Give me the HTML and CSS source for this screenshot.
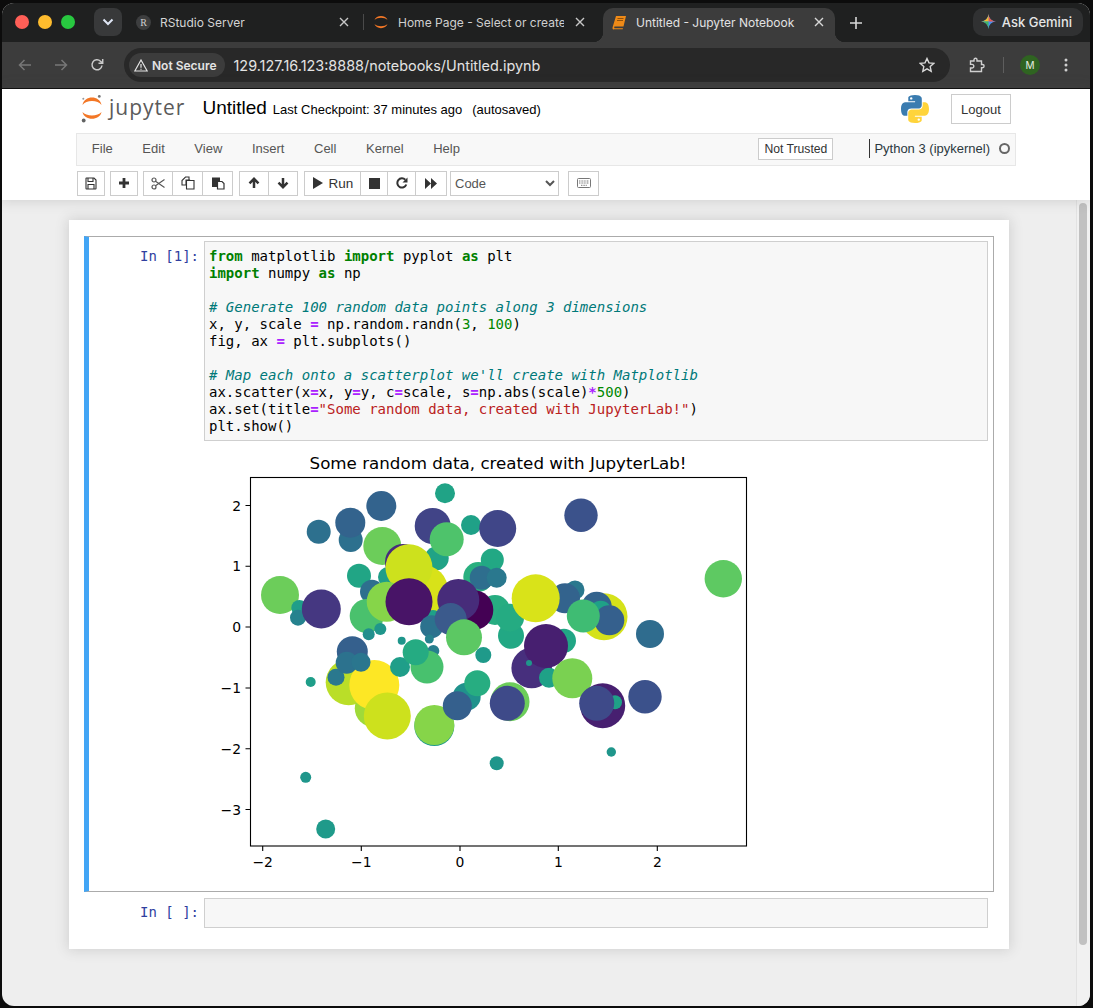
FILE: index.html
```html
<!DOCTYPE html>
<html lang="en">
<head>
	<meta charset="UTF-8">
	<title>Untitled - Jupyter Notebook</title>
	<link rel="stylesheet" href="styles.css">
</head>
<body>
<div class="window">

	<!-- browser tabs -->
	<div class="tabstrip">
		<div class="lights">
			<span class="light light--red"></span>
			<span class="light light--yellow"></span>
			<span class="light light--green"></span>
		</div>
		<div class="tabsearch">
			<svg width="12" height="8" viewBox="0 0 12 8"><path d="M1.5 1.5 6 6l4.5-4.5" fill="none" stroke="#dfe6f5" stroke-width="2"/></svg>
		</div>
		<div class="tab tab--first">
			<span class="tab--rstudio">R</span>
			<span class="tab--text">RStudio Server</span>
			<svg class="tab--close" width="10" height="10" viewBox="0 0 10 10"><path d="M1 1l8 8M9 1l-8 8" stroke="#c7c7c7" stroke-width="1.4"/></svg>
		</div>
		<div class="tab tab--second">
			<svg class="tab--icon" width="16" height="16" viewBox="0 0 16 16"><path d="M1.500 6C3 .5 13 .5 14.500 6 11.500 3 4.500 3 1.500 6zM1.500 10C3 15.500 13 15.500 14.500 10 11.500 13 4.500 13 1.500 10z" fill="#f37726"/></svg>
			<span class="tab--text">Home Page - Select or create</span>
			<svg class="tab--close" width="10" height="10" viewBox="0 0 10 10"><path d="M1 1l8 8M9 1l-8 8" stroke="#c7c7c7" stroke-width="1.4"/></svg>
		</div>
		<div class="tab tab--active">
			<svg class="tab--icon" width="15" height="15" viewBox="0 0 15 15"><path d="M4 1h10l-2.500 10.500H2.500a1.300 1.300 0 0 0 0 1.700H11l-.3 1H2C.8 15 .3 13.500.6 12.300z" fill="#ef8a17"/><path d="M5.500 3.500h6M5 5.500h6" stroke="#7a4308" stroke-width=".8"/></svg>
			<span class="tab--text">Untitled - Jupyter Notebook</span>
			<svg class="tab--close" width="10" height="10" viewBox="0 0 10 10"><path d="M1 1l8 8M9 1l-8 8" stroke="#d8d8d8" stroke-width="1.4"/></svg>
		</div>
		<svg class="newtab" width="12" height="12" viewBox="0 0 12 12"><path d="M6 0v12M0 6h12" stroke="#d8d8d8" stroke-width="1.6"/></svg>
		<div class="gemini">
			<svg width="15" height="15" viewBox="0 0 16 16">
				<path d="M8 0C8.500 4.500 11 7.500 16 8 11 8.500 8.500 11.500 8 16 7.500 11.500 5 8.500 0 8 5 7.500 7.500 4.500 8 0z" fill="#4b90f0"/>
				<path d="M8 0C8.500 4.500 11 7.500 16 8H8z" fill="#ea5a4c"/>
				<path d="M0 8C5 7.500 7.500 4.500 8 0V8z" fill="#f7bd2c"/>
				<path d="M8 16C7.500 11.500 5 8.500 0 8H8z" fill="#3fb463"/>
			</svg>
			<span>Ask Gemini</span>
		</div>
	</div>

	<!-- browser address row -->
	<div class="urlbar">
		<svg class="urlbar--nav" width="14" height="12" viewBox="0 0 14 12"><path d="M13 6H2M6.500 1 1.500 6l5 5" fill="none" stroke="#777" stroke-width="1.500"/></svg>
		<svg class="urlbar--nav" width="14" height="12" viewBox="0 0 14 12"><path d="M1 6h11M7.500 1l5 5-5 5" fill="none" stroke="#777" stroke-width="1.500"/></svg>
		<svg class="urlbar--nav" width="14" height="14" viewBox="0 0 14 14"><path d="M12 7.500A5 5 0 1 1 10.500 3.200L12.500 5M12.700 1v4.200H8.500" fill="none" stroke="#c9c9c9" stroke-width="1.500"/></svg>
		<div class="address">
			<div class="secure">
				<svg width="14" height="13" viewBox="0 0 14 13"><path d="M7 1l6.200 11H.8zM7 5v3.800M7 9.800v1" fill="none" stroke="#e4e4e4" stroke-width="1.200"/></svg>
				<span>Not Secure</span>
			</div>
			<span class="address--url">129.127.16.123:8888/notebooks/Untitled.ipynb</span>
			<svg class="address--star" width="16" height="16" viewBox="0 0 16 16"><path d="M8 1.500l2 4.400 4.700.5-3.500 3.200 1 4.700L8 11.900 3.800 14.300l1-4.700L1.300 6.400 6 5.900z" fill="none" stroke="#d8d8d8" stroke-width="1.400"/></svg>
		</div>
		<svg class="urlbar--ext" width="16" height="16" viewBox="0 0 16 16"><path d="M1.500 4H5V2.800a1.500 1.500 0 0 1 3 0V4h4.500v3.500h1a1.600 1.600 0 0 1 0 3.200h-1V14.500H1.500v-3.500H3a1.800 1.800 0 0 0 0-3.600H1.500z" fill="none" stroke="#d0d0d0" stroke-width="1.400"/></svg>
		<span class="urlbar--sep"></span>
		<span class="avatar">M</span>
		<svg class="urlbar--menu" width="4" height="14" viewBox="0 0 4 14"><circle cx="2" cy="2" r="1.500" fill="#d0d0d0"/><circle cx="2" cy="7" r="1.500" fill="#d0d0d0"/><circle cx="2" cy="12" r="1.500" fill="#d0d0d0"/></svg>
	</div>

	<!-- notebook header -->
	<div class="header">
		<div class="header--top">
			<svg class="logo" width="22" height="28" viewBox="0 0 22 28">
				<path d="M1.500 10C3 0 19 0 20.500 10 17 4.500 5 4.500 1.500 10zM1.500 17C3 26 19 26 20.500 17 17 21.500 5 21.500 1.500 17z" fill="#f37726"/>
				<circle cx="18.300" cy="1.400" r="1.400" fill="#767677"/>
				<circle cx="2.300" cy="3.700" r="1" fill="#989798"/>
				<circle cx="2.700" cy="25.500" r="1.900" fill="#616262"/>
			</svg>
			<span class="logo--text">jupyter</span>
			<span class="name">Untitled</span>
			<span class="checkpoint">Last Checkpoint: 37 minutes ago</span>
			<span class="autosaved">(autosaved)</span>
			<svg class="pylogo" width="28" height="28" viewBox="0 0 110 110">
				<path d="M54.900 0C26.800 0 28.600 12.200 28.600 12.200v12.600h26.800v3.800H17.900S0 26.600 0 54.800 15.600 82 15.600 82h9.300V68.900S24.400 53.300 40.300 53.300h26.500s14.900.2 14.900-14.400V14.800S84 0 54.900 0zM40.200 8.500a4.800 4.800 0 1 1 0 9.600 4.800 4.800 0 0 1 0-9.600z" fill="#3a7cb0"/>
				<path transform="rotate(180 55 55)" d="M54.900 0C26.800 0 28.600 12.200 28.600 12.200v12.600h26.800v3.800H17.900S0 26.600 0 54.800 15.600 82 15.600 82h9.300V68.900S24.400 53.300 40.300 53.300h26.500s14.900.2 14.900-14.400V14.800S84 0 54.900 0zM40.200 8.500a4.800 4.800 0 1 1 0 9.600 4.800 4.800 0 0 1 0-9.600z" fill="#ffd43b"/>
			</svg>
			<button class="logout">Logout</button>
		</div>
		<div class="menubar">
			<span class="menubar--item">File</span>
			<span class="menubar--item">Edit</span>
			<span class="menubar--item">View</span>
			<span class="menubar--item">Insert</span>
			<span class="menubar--item">Cell</span>
			<span class="menubar--item">Kernel</span>
			<span class="menubar--item">Help</span>
			<span class="trusted">Not Trusted</span>
			<span class="kernel">Python 3 (ipykernel)</span>
			<span class="kernel--dot"></span>
		</div>
		<div class="toolbar">
			<div class="group">
				<button class="tool tool--single"><svg width="12" height="13" viewBox="0 0 12 13"><path d="M1.500 1h7.500l2 2v8.500a.5.500 0 0 1-.5.500h-9a.5.500 0 0 1-.5-.5V1.500a.5.500 0 0 1 .5-.5zM3 1v3.500h5V1M3 12V7.500h6V12" fill="none" stroke="#333" stroke-width="1.100"/></svg></button>
			</div>
			<div class="group">
				<button class="tool tool--single"><svg width="12" height="12" viewBox="0 0 12 12"><path d="M6 1v10M1 6h10" stroke="#333" stroke-width="2.800"/></svg></button>
			</div>
			<div class="group group--wide">
				<button class="tool"><svg width="14" height="13" viewBox="0 0 14 13"><circle cx="3" cy="3" r="2" fill="none" stroke="#555" stroke-width="1.200"/><circle cx="3" cy="10" r="2" fill="none" stroke="#555" stroke-width="1.200"/><path d="M4.500 4.300 13.500 10.500M4.500 8.700 13.500 2.500" stroke="#555" stroke-width="1.100"/></svg></button>
				<button class="tool"><svg width="14" height="14" viewBox="0 0 14 14"><path d="M4.500 1H8v3H5V9H1V4.500zM5 4h3.500L9 4.500M5.500 4.500H13V13H5.500z" fill="#fff" stroke="#333" stroke-width="1.100"/></svg></button>
				<button class="tool"><svg width="14" height="14" viewBox="0 0 14 14"><path d="M1 1.500h8V5H6v6H1z" fill="#333"/><path d="M6.500 5.500H11l2 2V13H6.500z" fill="#fff" stroke="#333" stroke-width="1.200"/></svg></button>
			</div>
			<div class="group group--wide">
				<button class="tool"><svg width="12" height="12" viewBox="0 0 12 12"><path d="M6 11V2M1.500 6.300 6 1.800l4.500 4.500" fill="none" stroke="#333" stroke-width="2.500"/></svg></button>
				<button class="tool tool--down"><svg width="12" height="12" viewBox="0 0 12 12"><path d="M6 1v9M1.500 5.700 6 10.200l4.500-4.500" fill="none" stroke="#333" stroke-width="2.500"/></svg></button>
			</div>
			<div class="group">
				<button class="tool tool--run"><svg width="11" height="12" viewBox="0 0 11 12"><path d="M1 0l10 6-10 6z" fill="#333"/></svg><span>Run</span></button>
				<button class="tool tool--stop"><svg width="11" height="11" viewBox="0 0 11 11"><path d="M0 0h11v11H0z" fill="#333"/></svg></button>
				<button class="tool tool--restart"><svg width="12" height="12" viewBox="0 0 12 12"><path d="M10.300 7.500A4.600 4.600 0 1 1 9.300 2.800" fill="none" stroke="#333" stroke-width="2"/><path d="M11.500 0.500v5h-5z" fill="#333"/></svg></button>
				<button class="tool tool--ffwd"><svg width="12" height="11" viewBox="0 0 12 11"><path d="M0 0l6 5.500L0 11zM6 0l6 5.500L6 11z" fill="#333"/></svg></button>
			</div>
			<select class="celltype"><option>Code</option></select>
			<button class="tool tool--keys"><svg width="14" height="10" viewBox="0 0 14 10"><rect x=".5" y=".5" width="13" height="9" rx="1" fill="none" stroke="#777"/><path d="M2 3h10M2 5h10M4 7.300h6" stroke="#777" stroke-dasharray="1 .6"/></svg></button>
		</div>
	</div>

	<div class="site">
		<div class="notebook">
			<div class="panel">

				<div class="cell cell--selected">
					<div class="cell--input">
						<div class="prompt">In [1]:</div>
<pre class="code"><b class="kw">from</b> matplotlib <b class="kw">import</b> pyplot <b class="kw">as</b> plt
<b class="kw">import</b> numpy <b class="kw">as</b> np

<i class="cm"># Generate 100 random data points along 3 dimensions</i>
x, y, scale <b class="op">=</b> np.random.randn(<span class="num">3</span>, <span class="num">100</span>)
fig, ax <b class="op">=</b> plt.subplots()

<i class="cm"># Map each onto a scatterplot we'll create with Matplotlib</i>
ax.scatter(x<b class="op">=</b>x, y<b class="op">=</b>y, c<b class="op">=</b>scale, s<b class="op">=</b>np.abs(scale)<b class="op">*</b><span class="num">500</span>)
ax.set(title<b class="op">=</b><span class="str">"Some random data, created with JupyterLab!"</span>)
plt.show()</pre>
					</div>
					<svg class="plot" width="560" height="445" viewBox="204 441 560 445">
						<text class="plot--title" x="498" y="469" text-anchor="middle">Some random data, created with JupyterLab!</text>
						<g>
							<circle cx="445" cy="493.300" r="10" fill="#20a386"/>
							<circle cx="350.700" cy="540" r="12" fill="#2d708e"/>
							<circle cx="381.300" cy="506" r="15" fill="#33638d"/>
							<circle cx="350.300" cy="522.700" r="15" fill="#33638d"/>
							<circle cx="318.700" cy="531.700" r="12" fill="#2d708e"/>
							<circle cx="432.700" cy="526" r="18" fill="#414487"/>
							<circle cx="436.700" cy="558.300" r="12" fill="#20a386"/>
							<circle cx="446.700" cy="539.300" r="17" fill="#4ec36b"/>
							<circle cx="471" cy="525" r="10" fill="#1fa187"/>
							<circle cx="497.700" cy="528.500" r="18.500" fill="#404688"/>
							<circle cx="382.300" cy="546" r="19" fill="#6ccd5a"/>
							<circle cx="388" cy="577" r="10" fill="#1f9e89"/>
							<circle cx="359" cy="575.700" r="12" fill="#21a585"/>
							<circle cx="372" cy="591.700" r="12" fill="#2e6f8e"/>
							<circle cx="280" cy="595" r="19" fill="#6ccd5a"/>
							<circle cx="299.300" cy="608" r="8" fill="#1f9e89"/>
							<circle cx="298" cy="617.700" r="8" fill="#26828e"/>
							<circle cx="321.300" cy="609" r="19.500" fill="#453781"/>
							<circle cx="366.700" cy="616" r="17" fill="#4ac16d"/>
							<circle cx="423" cy="590" r="25" fill="#d8e219"/>
							<circle cx="403" cy="562" r="18" fill="#472d7b"/>
							<circle cx="409" cy="567.700" r="23.500" fill="#cde11d"/>
							<circle cx="386.700" cy="601.700" r="20" fill="#86d549"/>
							<circle cx="433" cy="618" r="8" fill="#1fa088"/>
							<circle cx="409" cy="601.700" r="23.500" fill="#481467"/>
							<circle cx="368.700" cy="634.300" r="6" fill="#218f8d"/>
							<circle cx="380.300" cy="629" r="6" fill="#1f968b"/>
							<circle cx="401.700" cy="640.700" r="4" fill="#1f968b"/>
							<circle cx="431.700" cy="626.700" r="11.500" fill="#2c728e"/>
							<circle cx="429.300" cy="639" r="4.500" fill="#26828e"/>
							<circle cx="433.300" cy="651" r="6" fill="#277f8e"/>
							<circle cx="483.300" cy="655" r="8" fill="#1f9a8a"/>
							<circle cx="478.300" cy="577" r="15" fill="#29af7f"/>
							<circle cx="492.300" cy="560" r="11.500" fill="#22a884"/>
							<circle cx="481.700" cy="577.700" r="12" fill="#2e6e8e"/>
							<circle cx="496.700" cy="577.700" r="10" fill="#2a788e"/>
							<circle cx="495" cy="610" r="15" fill="#27ad81"/>
							<circle cx="473.300" cy="610" r="20" fill="#440154"/>
							<circle cx="458.300" cy="600" r="21" fill="#472c7a"/>
							<circle cx="450.700" cy="619" r="16" fill="#3b5a8c"/>
							<circle cx="464" cy="637.300" r="18" fill="#5cc863"/>
							<circle cx="511" cy="635.700" r="13" fill="#22a884"/>
							<circle cx="510" cy="617.700" r="14" fill="#25ab82"/>
							<circle cx="575" cy="590" r="9.500" fill="#2a788e"/>
							<circle cx="565" cy="598.300" r="15" fill="#33638d"/>
							<circle cx="535.700" cy="598.300" r="24" fill="#d9e319"/>
							<circle cx="604" cy="616.700" r="23.500" fill="#d5e21a"/>
							<circle cx="596.700" cy="606.700" r="15" fill="#33638d"/>
							<circle cx="600.700" cy="611.700" r="11" fill="#1fa187"/>
							<circle cx="609.300" cy="620.300" r="15" fill="#35608d"/>
							<circle cx="583.300" cy="616" r="16.500" fill="#3fbc73"/>
							<circle cx="650" cy="634" r="14" fill="#2f6c8e"/>
							<circle cx="581" cy="515.300" r="16.700" fill="#3b528b"/>
							<circle cx="723.300" cy="578.700" r="18.700" fill="#5ec962"/>
							<circle cx="531.700" cy="668" r="20.300" fill="#472f7d"/>
							<circle cx="564" cy="640.700" r="12" fill="#21a685"/>
							<circle cx="549" cy="677.700" r="10" fill="#1fa187"/>
							<circle cx="546" cy="646" r="22" fill="#471f70"/>
							<circle cx="529" cy="663" r="3" fill="#1f968b"/>
							<circle cx="572.300" cy="678.300" r="20" fill="#7ad151"/>
							<circle cx="602.700" cy="705.700" r="22.500" fill="#471f70"/>
							<circle cx="615" cy="702.300" r="7" fill="#1fa187"/>
							<circle cx="596.700" cy="703.300" r="17.500" fill="#3e4a89"/>
							<circle cx="645" cy="696.700" r="16.700" fill="#3b518b"/>
							<circle cx="611.300" cy="752" r="4.700" fill="#1f968b"/>
							<circle cx="496.700" cy="763.300" r="7" fill="#1f968b"/>
							<circle cx="510" cy="701.700" r="19.500" fill="#6ccd5a"/>
							<circle cx="507.300" cy="703.300" r="17.500" fill="#3e4a89"/>
							<circle cx="310.700" cy="682" r="5" fill="#1f9e89"/>
							<circle cx="348.700" cy="682.300" r="23" fill="#bade28"/>
							<circle cx="336" cy="677.300" r="8.500" fill="#2a788e"/>
							<circle cx="373.300" cy="708.300" r="18.500" fill="#a0da39"/>
							<circle cx="352.300" cy="651.700" r="15.500" fill="#35608d"/>
							<circle cx="374.300" cy="685" r="25" fill="#fde725"/>
							<circle cx="346.700" cy="662.700" r="11" fill="#2c728e"/>
							<circle cx="361" cy="662.300" r="9.500" fill="#2a768e"/>
							<circle cx="387.300" cy="716" r="23.500" fill="#cde11d"/>
							<circle cx="400" cy="667" r="10" fill="#1f9e89"/>
							<circle cx="427" cy="667" r="16.500" fill="#48c16e"/>
							<circle cx="415.700" cy="652.300" r="13" fill="#25ab82"/>
							<circle cx="434.300" cy="726" r="20" fill="#1f9a8a"/>
							<circle cx="434.300" cy="725" r="20" fill="#86d549"/>
							<circle cx="466.700" cy="696.700" r="14" fill="#20928c"/>
							<circle cx="477.300" cy="683.300" r="13" fill="#27ad81"/>
							<circle cx="457.300" cy="705.700" r="14.500" fill="#35608d"/>
							<circle cx="305.700" cy="777.300" r="5.500" fill="#1f968b"/>
							<circle cx="325.700" cy="829" r="9.500" fill="#1f9a8a"/>
						</g>
						<rect x="250.500" y="477.500" width="496" height="368.500" fill="none" stroke="#000" stroke-width="1.100"/>
						<path d="M262.700 846v5M361.300 846v5M460 846v5M558.300 846v5M657.300 846v5M250.500 505.500h-5M250.500 566.300h-5M250.500 627h-5M250.500 688h-5M250.500 748.700h-5M250.500 809.500h-5" stroke="#000" stroke-width="1.100"/>
						<g class="plot--ticks">
							<text x="262.700" y="867" text-anchor="middle">−2</text>
							<text x="361.300" y="867" text-anchor="middle">−1</text>
							<text x="460" y="867" text-anchor="middle">0</text>
							<text x="558.300" y="867" text-anchor="middle">1</text>
							<text x="657.300" y="867" text-anchor="middle">2</text>
							<text x="241" y="510.500" text-anchor="end">2</text>
							<text x="241" y="571.300" text-anchor="end">1</text>
							<text x="241" y="632" text-anchor="end">0</text>
							<text x="241" y="693" text-anchor="end">−1</text>
							<text x="241" y="753.700" text-anchor="end">−2</text>
							<text x="241" y="814.500" text-anchor="end">−3</text>
						</g>
					</svg>
				</div>

				<div class="cell cell--next">
					<div class="cell--input">
						<div class="prompt prompt--empty">In [ ]:</div>
						<div class="code code--empty"></div>
					</div>
				</div>

			</div>
		</div>
		<div class="scrollbar"><div class="scrollbar--thumb"></div></div>
	</div>
</div>
</body>
</html>
```

FILE: styles.css
```css
body {
	margin: 0;
	height: 1008px;
	overflow: hidden;
	background: #0c0c0c;
	font-family: "Liberation Sans", Arial, sans-serif;
}

.window {
	width: 1088px;
	height: 1003px;
	margin: 3px 0 0 2px;
	border-radius: 12px;
	overflow: hidden;
	display: flex;
	flex-direction: column;
	background: #eee;
}

/* tabs */
.tabstrip {
	display: flex;
	align-items: center;
	height: 39px;
	flex: none;
	background: #1f2020;
	color: #d4d4d4;
	font-family: Inter, "Liberation Sans", sans-serif;
	font-size: 12px;
}

.lights {
	display: flex;
	gap: 9px;
	margin-left: 13px;
	margin-bottom: 2px;
}

.light {
	width: 14px;
	height: 14px;
	border-radius: 50%;
}

.light--red { background: #ff5f57; }
.light--yellow { background: #febc2e; }
.light--green { background: #28c840; }

.tabsearch {
	display: flex;
	justify-content: center;
	align-items: center;
	width: 28px;
	height: 28px;
	margin: 0 0 2px 19px;
	border-radius: 8px;
	background: #38393a;
}

.tab {
	display: flex;
	align-items: center;
	align-self: flex-end;
	height: 34px;
	box-sizing: border-box;
	overflow: hidden;
}

.tab--first {
	width: 238px;
	margin-left: 4px;
	padding: 0 15px 6px 10px;
	position: relative;
}

.tab--first::after {
	content: "";
	position: absolute;
	right: 0;
	top: 6px;
	height: 16px;
	width: 1px;
	background: #4a4a4a;
}

.tab--second {
	width: 239px;
	padding: 0 18px 6px 9px;
}

.tab--active {
	width: 232px;
	padding: 0 11px 6px 9px;
	background: #3c3c3c;
	color: #e2e2e2;
	border-radius: 10px 10px 0 0;
	position: relative;
	overflow: visible;
}

.tab--active::before,
.tab--active::after {
	content: "";
	position: absolute;
	bottom: 0;
	width: 10px;
	height: 10px;
}

.tab--active::before {
	left: -10px;
	background: radial-gradient(circle at 0 0, #1f2020 10px, #3c3c3c 10.500px);
}

.tab--active::after {
	right: -10px;
	background: radial-gradient(circle at 100% 0, #1f2020 10px, #3c3c3c 10.500px);
}

.tab--rstudio {
	display: flex;
	justify-content: center;
	align-items: center;
	flex: none;
	width: 15px;
	height: 15px;
	border-radius: 50%;
	background: #3d3e3f;
	font-family: "Liberation Serif", serif;
	font-size: 10px;
	color: #cfcfcf;
}

.tab--icon {
	flex: none;
}

.tab--text {
	flex: 1;
	min-width: 0;
	margin-left: 9px;
	white-space: nowrap;
	overflow: hidden;
}

.tab--second .tab--text {
	color: #cfcfcf;
}

.tab--close {
	flex: none;
	margin-left: 11px;
}

.newtab {
	margin: 0 0 0 15px;
	align-self: center;
}

.gemini {
	display: flex;
	align-items: center;
	gap: 6px;
	height: 28px;
	margin: 0 7px 2px auto;
	padding: 0 11px 0 8px;
	border-radius: 10px;
	background: #303132;
	font-size: 13px;
	font-weight: 500;
	color: #e6e6e6;
}

/* address row */
.urlbar {
	display: flex;
	align-items: center;
	height: 46px;
	flex: none;
	padding-left: 16px;
	background: #3c3c3c;
	font-family: Inter, "Liberation Sans", sans-serif;
}

.urlbar--nav {
	flex: none;
	margin-right: 22px;
}

.address {
	display: flex;
	align-items: center;
	width: 826px;
	height: 34px;
	margin-left: -2px;
	box-sizing: border-box;
	padding: 0 15px 0 5px;
	border-radius: 17px;
	background: #282828;
}

.secure {
	display: flex;
	align-items: center;
	gap: 4px;
	height: 24px;
	padding: 0 8px 0 5px;
	border-radius: 12px;
	background: #3c3c3c;
	font-size: 12px;
	font-weight: 600;
	color: #e4e4e4;
}

.address--url {
	margin-left: 9px;
	font-size: 14.400px;
	color: #e3e3e3;
}

.address--star {
	margin-left: auto;
}

.urlbar--ext {
	margin-left: 19px;
	flex: none;
}

.urlbar--sep {
	width: 1px;
	height: 16px;
	margin-left: 18px;
	background: #5e5e5e;
}

.avatar {
	display: flex;
	justify-content: center;
	align-items: center;
	width: 20px;
	height: 20px;
	margin-left: 16px;
	border-radius: 50%;
	background: #2f6421;
	font-size: 10px;
	color: #e6efe2;
}

.urlbar--menu {
	margin-left: 24px;
}

/* notebook header */
.header {
	flex: none;
	height: 112px;
	background: #fff;
	box-shadow: 0 0 12px 1px rgba(87, 87, 87, 0.2);
	position: relative;
	border-top: 1px solid #111;
	box-sizing: border-box;
}

.header--top {
	display: flex;
	align-items: center;
	box-sizing: border-box;
	height: 44px;
	padding: 0 0 4px 79px;
	color: #000;
}

.logo {
	flex: none;
}

.logo--text {
	margin-left: 6px;
	font-family: "Open Sans", sans-serif;
	font-size: 21px;
	letter-spacing: 1px;
	color: #5b5b5b;
	position: relative;
	top: -2px;
}

.name {
	margin-left: 17px;
	font-size: 19px;
	position: relative;
	top: -1px;
}

.checkpoint {
	margin-left: 6px;
	font-size: 13px;
}

.autosaved {
	margin-left: 10px;
	font-size: 13px;
}

.pylogo {
	margin-left: auto;
	flex: none;
}

.logout {
	width: 60px;
	height: 30px;
	margin: 0 79px 0 22px;
	border: 1px solid #ccc;
	background: #fff;
	font-family: inherit;
	font-size: 13px;
	color: #333;
}

.menubar {
	display: flex;
	align-items: center;
	box-sizing: border-box;
	width: 940px;
	height: 33px;
	margin-left: 74px;
	padding-bottom: 2px;
	background: #f8f8f8;
	border: 1px solid #e7e7e7;
	font-size: 13px;
	color: #555;
}

.menubar--item {
	padding: 0 14.800px;
}

.trusted {
	margin-left: auto;
	padding: 3px 5px;
	border: 1px solid #ccc;
	background: #fff;
	font-size: 12.200px;
	color: #333;
	line-height: 14px;
}

.kernel {
	margin-left: 36px;
	padding-left: 4px;
	border-left: 1px solid #333;
	line-height: 19px;
	color: #2b3840;
}

.kernel--dot {
	box-sizing: border-box;
	width: 11px;
	height: 11px;
	margin: 0 5px 0 9px;
	border: 2px solid #666;
	border-radius: 50%;
}

.toolbar {
	display: flex;
	align-items: center;
	height: 24px;
	margin: 5px 0 0 75px;
}

.group {
	display: flex;
	margin-right: 5px;
}

.group--wide {
	margin-right: 6px;
}

.tool {
	display: flex;
	justify-content: center;
	align-items: center;
	gap: 6px;
	width: 30px;
	height: 25px;
	padding: 0;
	border: 1px solid #ccc;
	background: #fff;
	font-family: inherit;
	font-size: 13.500px;
	color: #333;
}

.group .tool + .tool {
	margin-left: -1px;
	width: 31px;
}

.tool--single {
	width: 28px;
}

.tool--run {
	width: 57px;
}

.group .tool + .tool--down {
	width: 30px;
}

.group .tool + .tool--stop {
	width: 28px;
}

.group .tool + .tool--restart {
	width: 29px;
}

.group .tool + .tool--ffwd {
	width: 32px;
}

.celltype {
	width: 109px;
	height: 25px;
	margin: 0 9px 0 -2px;
	border: 1px solid #ccc;
	background: #fff;
	font-family: inherit;
	font-size: 13px;
	color: #555;
}

.tool--keys {
	width: 31px;
}

/* notebook */
.site {
	flex: 1;
	display: flex;
	min-height: 0;
}

.notebook {
	flex: 1;
	padding-top: 20px;
}

.panel {
	width: 910px;
	margin: 0 auto;
	padding: 16px 15px 16px;
	background: #fff;
	box-shadow: 0 0 12px 1px rgba(87, 87, 87, 0.2);
}

.cell {
	padding: 5px 6px 5px 10px;
}

.cell--selected {
	padding: 4px 5px 5px 5px;
	border: 1px solid #ababab;
	border-left: 5px solid #42a5f5;
	box-sizing: border-box;
	height: 656px;
}

.cell--next {
	margin-top: 1px;
}

.cell--input {
	display: flex;
}

.prompt {
	flex: none;
	box-sizing: border-box;
	width: 110px;
	padding: 7px 5px 0 0;
	text-align: right;
	font-family: "DejaVu Sans Mono", monospace;
	font-size: 14px;
	line-height: 17px;
	color: #303f9f;
}

.prompt--empty {
	padding-top: 6px;
}

.code {
	flex: 1;
	margin: 0;
	padding: 6px 4px 5px;
	border: 1px solid #cfcfcf;
	background: #f7f7f7;
	font-family: "DejaVu Sans Mono", monospace;
	font-size: 14px;
	line-height: 17px;
	color: #000;
}

.code--empty {
	height: 17px;
}

.kw { color: #008000; }
.op { color: #aa22ff; }
.num { color: #008800; }
.str { color: #ba2121; }
.cm { color: #007979; }

.plot {
	display: block;
	margin-left: 110px;
}

.plot--title {
	font-family: "DejaVu Sans", sans-serif;
	font-size: 16.700px;
}

.plot--ticks {
	font-family: "DejaVu Sans", sans-serif;
	font-size: 13.900px;
}

.scrollbar {
	flex: none;
	width: 14px;
	padding: 3px 0 0 2px;
	box-sizing: border-box;
	background: #f1f1f1;
	border-left: 1px solid #e2e2e2;
}

.scrollbar--thumb {
	width: 8px;
	height: 742px;
	border-radius: 4px;
	background: #c1c1c1;
}
```
